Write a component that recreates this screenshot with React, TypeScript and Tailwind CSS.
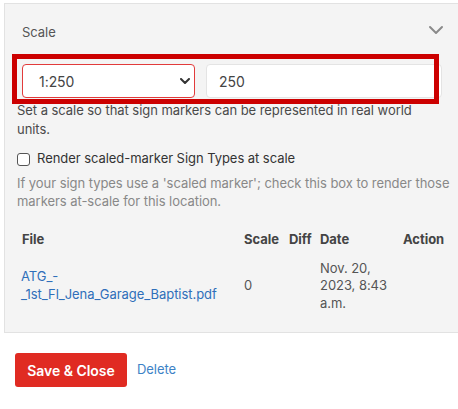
import { ChevronDown } from "lucide-react";

export default function App() {
  return (
    <div className="relative w-[458px] h-[409px] overflow-hidden bg-white font-[family-name:Inter,sans-serif] text-[13px] tracking-[-0.05px]">
      {/* panel */}
      <div className="ml-[4px] mt-[3px] w-[480px] border border-[#e2e2e2] bg-[#f4f4f4] pl-[12px] pb-[12px]">
        <div className="w-[426px]">
          <div className="flex items-center justify-between pt-[18px] pl-[5px]">
            <span className="leading-[20px] text-[#555]">Scale</span>
            <ChevronDown className="h-6 w-6 -mt-[4px] -mr-[5px] text-[#8a8a8a]" strokeWidth={2} />
          </div>

          <div className="mt-[22px] flex gap-[11px] pl-[5px] pr-[1px]">
            <div className="relative w-[173px] h-[34px]">
              <select
                defaultValue="1:250"
                className="h-full w-full appearance-none rounded-[4px] border border-[#e23b3b] bg-white pl-[16px] text-[14px] text-[#444] outline-none"
              >
                <option>1:250</option>
                <option>1:100</option>
                <option>1:500</option>
              </select>
              <svg
                className="pointer-events-none absolute right-[5px] top-[14px]"
                width="10"
                height="6"
                viewBox="0 0 10 6"
                fill="none"
              >
                <path d="M1 1l4 4 4-4" stroke="#333" strokeWidth="2" strokeLinecap="round" strokeLinejoin="round" />
              </svg>
            </div>
            <input
              defaultValue="250"
              className="h-[34px] flex-1 rounded-[4px] border border-[#e4e4e4] bg-white pl-[12px] text-[14px] text-[#444] outline-none"
            />
          </div>

          <p className="mt-[3px] leading-[19px] text-[#4a4a4a]">
            Set a scale so that sign markers can be represented in real world units.
          </p>

          <label className="mt-[10px] flex items-center gap-[7px] leading-[19px] text-[#333]">
            <input
              type="checkbox"
              className="h-[13px] w-[13px] appearance-none rounded-[3px] border border-[#555] bg-white mt-[2px]"
            />
            Render scaled-marker Sign Types at scale
          </label>

          <p className="mt-[6px] w-[446px] leading-[18px] text-[#888]">
            If your sign types use a 'scaled marker'; check this box to render those markers at-scale for this location.
          </p>

          <div className="mt-[13px] pl-[5px] grid grid-cols-[222px_45px_31px_83px_1fr] leading-[17.5px]">
            <div className="py-[8px] font-bold text-[#444]">File</div>
            <div className="py-[8px] font-bold text-[#444]">Scale</div>
            <div className="py-[8px] font-bold text-[#444]">Diff</div>
            <div className="py-[8px] font-bold text-[#444]">Date</div>
            <div className="py-[8px] font-bold text-[#444] text-right">Action</div>

            <div className="flex items-center pt-[3px] pb-[8px] pr-[4px] -ml-[1px]">
              <a href="#" className="text-[#2f6fba]">
                ATG_-<wbr />_1st_Fl_Jena_Garage_Baptist.pdf
              </a>
            </div>
            <div className="flex items-center pt-[3px] pb-[8px] text-[#555]">0</div>
            <div className="pt-[3px] pb-[8px]"></div>
            <div className="pt-[3px] pb-[8px] pr-[6px] text-[#555]">Nov. 20, 2023, 8:43 a.m.</div>
            <div className="pt-[3px] pb-[8px]"></div>
          </div>
        </div>
      </div>

      <div className="mt-[20px] ml-[15px] flex items-center gap-[10px]">
        <button className="h-[34px] w-[112px] rounded-[3px] bg-[#e02b22] text-[14px] font-semibold text-white">
          Save &amp; Close
        </button>
        <a href="#" className="text-[13px] text-[#3d82c6]">
          Delete
        </a>
      </div>

      {/* annotation box */}
      <div className="pointer-events-none absolute left-[12px] top-[54px] h-[50px] w-[427px] border-[5px] border-[#cc0000]" />
    </div>
  );
}
